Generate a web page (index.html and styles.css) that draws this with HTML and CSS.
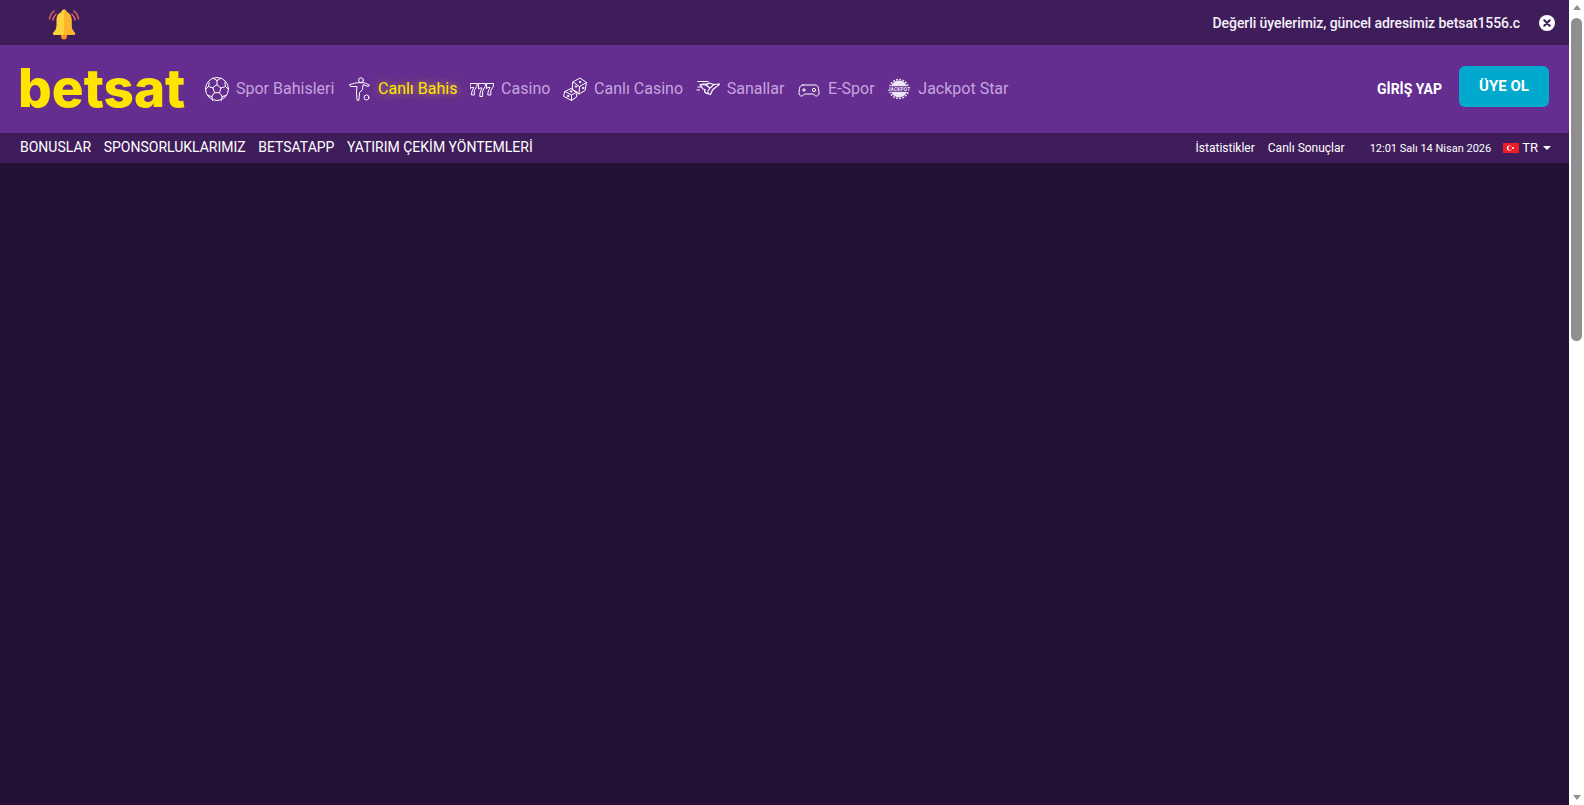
FILE: index.html
```html
<!DOCTYPE html>
<html lang="tr">
  <head>
    <meta charset="UTF-8" />
    <meta name="viewport" content="width=device-width, initial-scale=1.0" />
    <title>betsat</title>
    <link rel="stylesheet" href="styles.css">
  </head>
  <body>
    <div class="page">
      <div class="main">
        <!-- duyuru -->
        <div class="top-bar">
          <svg class="bell" viewBox="0 0 32 32" width="32" height="32">
            <path d="M1.5 11C2 7.500 3.500 5 6 3M5 12C5.300 9.500 6.300 7.800 8 6.300M30.500 11C30 7.500 28.500 5 26 3M27 12C26.700 9.500 25.700 7.800 24 6.300" fill="none" stroke="#e0685f" stroke-width="1.500" stroke-linecap="round" />
            <circle cx="16" cy="28.500" r="3" fill="#f7941d" />
            <path d="M16 1.500c1.500 0 2.500 1 2.500 2.500 3.500 1.200 5 4 5 8v6c0 3 2 5 3.500 7 .5 1-.2 2-1.200 2H6.200c-1 0-1.700-1-1.200-2 1.500-2 3.500-4 3.500-7v-6c0-4 1.500-6.800 5-8 0-1.500 1-2.500 2.500-2.500z" fill="#ffd43b" />
            <path d="M16 1.500c1.500 0 2.500 1 2.500 2.500 3.500 1.200 5 4 5 8v6c0 3 2 5 3.500 7 .5 1-.2 2-1.200 2H16z" fill="#fbb62c" />
          </svg>
          <div class="notice">Değerli üyelerimiz, güncel adresimiz betsat1556.c</div>
          <svg class="close" viewBox="0 0 16 16" width="16" height="16">
            <circle cx="8" cy="8" r="8" fill="#fff" />
            <path d="M5.300 5.300l5.400 5.400M10.700 5.300l-5.400 5.400" stroke="#401f5a" stroke-width="2.200" stroke-linecap="round" />
          </svg>
        </div>

        <!-- ana menu -->
        <header class="nav-bar">
          <a class="logo">betsat</a>
          <nav class="nav-list">
            <a class="nav-item">
              <svg viewBox="0 0 24 24" width="24" height="24" class="ico">
                <circle cx="12" cy="12" r="11.500" />
                <path d="M12 8l4 3-1.500 4.700h-5L8 11zM12 8V3.500M12 3.500L8 1.200M12 3.500l4-2.300M16 11l4.500-1.500M20.500 9.500l-.7-4M20.500 9.500l3 3M14.500 15.700l2.700 3.800M17.200 19.500l4-1M17.200 19.500l-1 4M9.500 15.700l-2.700 3.800M6.800 19.500l-4-1M6.800 19.500l1 4M8 11L3.500 9.500M3.500 9.500l.7-4M3.500 9.500l-3 3" />
              </svg>
              <span>Spor Bahisleri</span>
            </a>
            <a class="nav-item is-active">
              <svg viewBox="0 0 24 24" width="24" height="24" class="ico">
                <circle cx="14" cy="3.200" r="2.400" />
                <path d="M3 7.500c4-1 6-1.800 8-1.800h5c2 0 4.500 1.300 6.500 2.500-.3.800-.8 1.200-1.500 1.200l-5-1.800-.5 5-3 3-.5 7.500c-.8.500-1.500.500-2 0L9.500 15 10 9.500 3.500 9.500c-.6-.5-.8-1.200-.5-2z" />
                <circle cx="19.500" cy="20.500" r="2.500" />
              </svg>
              <span>Canlı Bahis</span>
            </a>
            <a class="nav-item">
              <svg viewBox="0 0 24 24" width="24" height="24" class="ico">
                <path d="M.5 6.500h6.800l-.5 3-2.500 4v4.500H1.500c0-3 .8-5 2.300-7.500H1.300l-.8 1zM8.800 6.500h6.800l-.5 3-2.500 4.500v5.500H9.800c0-3.500.8-6 2.300-8.500H9.600l-.8 1zM17 6.500h6.800l-.5 3-2.500 4v4.500h-3c0-3 .8-5 2.300-7.500h-2.500l-.8 1z" />
              </svg>
              <span>Casino</span>
            </a>
            <a class="nav-item">
              <svg viewBox="0 0 24 24" width="24" height="24" class="ico">
                <path d="M10 5l7-4 6.500 4.500-1.500 8-6 3.500-6.500-4zM10 5l6.500 4.500L16 17M16.500 9.500l7-4" />
                <path d="M2 14.500l6-3 6 3.500-.5 5-5 3.500L1 19.500zM2 14.500l6.500 3.500v5.500M8.500 18l5.500-3" />
                <circle cx="17" cy="5" r=".8" /><circle cx="13" cy="9.500" r=".8" /><circle cx="20" cy="11" r=".8" /><circle cx="8" cy="14.500" r=".8" /><circle cx="5" cy="19" r=".8" />
              </svg>
              <span>Canlı Casino</span>
            </a>
            <a class="nav-item">
              <svg viewBox="0 0 24 24" width="24" height="24" class="ico ico-thick">
                <path d="M2 4.500h10M6 7h5M1 13h2.500M2 10h3" />
                <path d="M4 7.500l6 .5 3-2 5 1.500 5.500-.5c-.8 1.500-1.800 2.500-3.500 3l-3.500 3-2 4.500-2-.5-.5-1.500-1.500 1-2-2 .5-2L7 12z" />
                <path d="M10 8l4 3-2 3M18 7.500l-4 3.500" />
              </svg>
              <span>Sanallar</span>
            </a>
            <a class="nav-item">
              <svg viewBox="0 0 24 24" width="24" height="24" class="ico">
                <path d="M6 8h12c2 0 3 1 3.500 3.500l.5 4c.2 2-.8 3.500-2.500 3.500-1.300 0-2-.7-3-2H7.500c-1 1.300-1.700 2-3 2-1.700 0-2.700-1.500-2.500-3.500l.5-4C3 9 4 8 6 8z" />
                <path d="M5.500 13h3M7 11.500v3" />
                <circle cx="17" cy="13" r="1.600" />
              </svg>
              <span>E-Spor</span>
            </a>
            <a class="nav-item">
              <svg viewBox="0 0 24 24" width="24" height="24">
                <circle cx="12" cy="12" r="8.500" fill="#efe6f5" />
                <circle cx="12" cy="12" r="9.500" fill="none" stroke="#efe6f5" stroke-width="1.600" stroke-dasharray="1.800 1.400" />
                <rect y="9.200" width="24" height="5.600" fill="#642d8f" />
                <text class="jackpot-text" x="12" y="13.900">JACKPOT</text>
              </svg>
              <span>Jackpot Star</span>
            </a>
          </nav>
          <div class="auth">
            <a class="login">GİRİŞ YAP</a>
            <a class="signup">ÜYE OL</a>
          </div>
        </header>

        <!-- alt menu -->
        <div class="sub-bar">
          <div class="sub-links">
            <a>BONUSLAR</a>
            <a>SPONSORLUKLARIMIZ</a>
            <a>BETSATAPP</a>
            <a>YATIRIM ÇEKİM YÖNTEMLERİ</a>
          </div>
          <div class="sub-right">
            <a class="stat-link">İstatistikler</a>
            <a class="stat-link">Canlı Sonuçlar</a>
            <span class="clock">12:01 Salı 14 Nisan 2026</span>
            <span class="lang">
              <svg viewBox="0 0 16 10" width="16" height="10">
                <rect width="16" height="10" fill="#ee1c25" />
                <circle cx="6.500" cy="5" r="2.600" fill="#fff" />
                <circle cx="7.300" cy="5" r="2.100" fill="#ee1c25" />
                <circle cx="10" cy="5" r="1.100" fill="#fff" />
              </svg>
              <span class="lang-code">TR</span>
              <i class="caret"></i>
            </span>
          </div>
        </div>

        <div class="content"></div>
      </div>

      <!-- kaydirma cubugu -->
      <div class="scroll">
        <i class="arrow-up"></i>
        <div class="track"><div class="thumb"></div></div>
        <i class="arrow-down"></i>
      </div>
    </div>
  </body>
</html>
```

FILE: styles.css
```css
html,
body {
  margin: 0;
  padding: 0;
  height: 100%;
  overflow: hidden;
}

body {
  font-family: Roboto, "Liberation Sans", sans-serif;
  background-color: #241135;
  color: #fff;
}

.page {
  display: flex;
  height: 100vh;
}

.main {
  flex: 1;
  display: flex;
  flex-direction: column;
  min-width: 0;
}

/* duyuru */
.top-bar {
  height: 45px;
  flex: none;
  display: flex;
  align-items: center;
  background-color: #3f1d5b;
  padding: 0 14px 0 48px;
}

.bell {
  margin-top: 3px;
}

.notice {
  margin-left: auto;
  font-size: 14px;
  font-weight: 500;
  letter-spacing: -0.08px;
  color: #f5f0f9;
  white-space: nowrap;
}

.close {
  margin-left: 19px;
}

/* ana menu */
.nav-bar {
  height: 88px;
  flex: none;
  display: flex;
  align-items: center;
  background-color: #642d8f;
  padding: 0 20px;
}

.logo {
  font-family: Inter, sans-serif;
  font-size: 53px;
  font-weight: 800;
  line-height: 1;
  color: #ffe400;
  width: 187px;
  margin-left: -2px;
  margin-bottom: 2px;
  flex: none;
}

.nav-list {
  display: flex;
  align-items: center;
  gap: 12.7px;
}

.nav-item {
  display: flex;
  align-items: center;
  gap: 7px;
  font-size: 16px;
  color: #c6a4df;
  white-space: nowrap;
}

.nav-item span {
  margin-top: -2px;
}

.nav-item.is-active {
  color: #ffe600;
  text-shadow: 0 0 8px rgba(255, 228, 0, 0.6);
}

.ico {
  fill: none;
  stroke: #fff;
  stroke-width: 1;
  stroke-linejoin: round;
  stroke-linecap: round;
}

.ico-thick {
  stroke-width: 1.200;
}

.jackpot-text {
  font-family: Roboto, sans-serif;
  font-size: 4.800px;
  font-weight: 700;
  letter-spacing: 0.2px;
  fill: #efe6f5;
  text-anchor: middle;
}

.auth {
  margin-left: auto;
  display: flex;
  align-items: center;
  gap: 17px;
}

.login {
  font-size: 14px;
  font-weight: 700;
}

.signup {
  width: 90px;
  height: 41px;
  display: flex;
  align-items: center;
  justify-content: center;
  background-color: #00a9cd;
  border-radius: 6px;
  margin-bottom: 6px;
  font-size: 15px;
  font-weight: 700;
}

/* alt menu */
.sub-bar {
  height: 30px;
  flex: none;
  display: flex;
  align-items: center;
  justify-content: space-between;
  background-color: #3f1d5b;
  padding: 0 18px 0 20px;
}

.sub-links {
  display: flex;
  gap: 12.5px;
  padding-bottom: 2px;
  font-size: 14px;
}

.sub-right {
  display: flex;
  align-items: center;
  font-size: 12px;
}

.stat-link {
  margin-right: 13px;
}

.clock {
  font-size: 11px;
  margin-left: 12px;
}

.lang {
  display: flex;
  align-items: center;
  margin-left: 12px;
  gap: 3px;
}

.lang-code {
  font-size: 13px;
  margin-top: -2px;
}

.caret {
  margin-left: 2px;
  border-left: 4.500px solid transparent;
  border-right: 4.500px solid transparent;
  border-top: 4.500px solid #fff;
}

.content {
  flex: 1;
}

/* kaydirma cubugu */
.scroll {
  width: 15px;
  flex: none;
  display: flex;
  flex-direction: column;
  align-items: center;
  background-color: #fff;
}

.arrow-up,
.arrow-down {
  flex: none;
  margin: 5px 0;
  border-left: 4px solid transparent;
  border-right: 4px solid transparent;
}

.arrow-up {
  border-bottom: 5px solid #8f8f8f;
}

.arrow-down {
  border-top: 5px solid #8f8f8f;
}

.track {
  flex: 1;
  width: 100%;
  display: flex;
  justify-content: center;
}

.thumb {
  width: 11px;
  height: 323px;
  margin-top: 3px;
  background-color: #8f8f8f;
  border-radius: 6px;
}
```
